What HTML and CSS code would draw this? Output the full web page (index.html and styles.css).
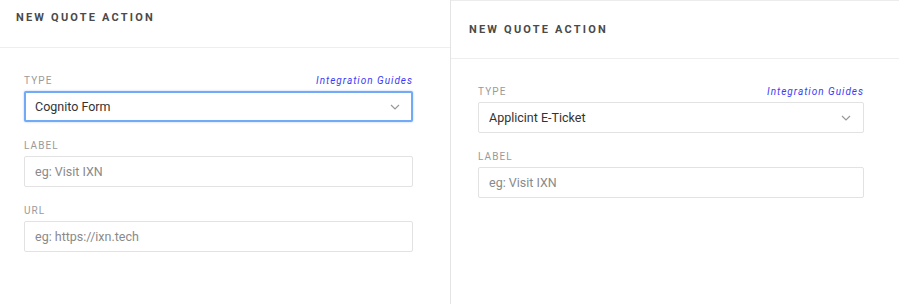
FILE: index.html
```html
<!DOCTYPE html>
<html lang="en">
<head>
<meta charset="UTF-8">
<title>New Quote Action</title>
<link rel="stylesheet" href="styles.css">
</head>
<body>

<div class="panels">
  <div class="panel panel-left">
    <div class="panel-header">
      <h2>New Quote Action</h2>
    </div>
    <div class="panel-body">
      <div class="field">
        <div class="field-label">
          <span>Type</span>
          <a href="#" class="guide-link">Integration Guides</a>
        </div>
        <div class="select focused">
          <span>Cognito Form</span>
          <svg class="chevron" width="10" height="6" viewBox="0 0 10 6"><path d="M1 1l4 4 4-4" fill="none" stroke="#999" stroke-width="1.2"/></svg>
        </div>
      </div>
      <div class="field">
        <div class="field-label"><span>Label</span></div>
        <input type="text" placeholder="eg: Visit IXN">
      </div>
      <div class="field">
        <div class="field-label"><span>URL</span></div>
        <input type="text" placeholder="eg: https://ixn.tech">
      </div>
    </div>
  </div>

  <div class="panel panel-right">
    <div class="panel-header">
      <h2>New Quote Action</h2>
    </div>
    <div class="panel-body">
      <div class="field">
        <div class="field-label">
          <span>Type</span>
          <a href="#" class="guide-link">Integration Guides</a>
        </div>
        <div class="select">
          <span>Applicint E-Ticket</span>
          <svg class="chevron" width="10" height="6" viewBox="0 0 10 6"><path d="M1 1l4 4 4-4" fill="none" stroke="#999" stroke-width="1.2"/></svg>
        </div>
      </div>
      <div class="field">
        <div class="field-label"><span>Label</span></div>
        <input type="text" placeholder="eg: Visit IXN">
      </div>
    </div>
  </div>
</div>

</body>
</html>
```

FILE: styles.css
```css
  body {
    margin: 0;
    padding: 0;
    background-color: #fff;
    font-family: Roboto, "Liberation Sans", sans-serif;
  }
  .panels {
    display: flex;
    height: 304px;
  }
  .panel-left {
    width: 450px;
    border-right: 1px solid #e4e4e4;
  }
  .panel-right {
    flex: 1;
    border-top: 1px solid #ececec;
  }
  .panel-header {
    border-bottom: 1px solid #eeeeee;
  }
  .panel-header h2 {
    margin: 0;
    font-size: 11px;
    line-height: 14px;
    font-weight: 700;
    letter-spacing: 2.2px;
    text-transform: uppercase;
    color: #4a4a4a;
  }
  .panel-left .panel-header {
    padding: 11px 16px 22px;
  }
  .panel-right .panel-header {
    padding: 22px 18px 21px;
  }
  .panel-body {
    padding-top: 25px;
  }
  .panel-left .panel-body {
    padding-left: 24px;
    padding-right: 37px;
  }
  .panel-right .panel-body {
    padding-left: 27px;
    padding-right: 35px;
  }
  .field {
    margin-bottom: 16px;
  }
  .field-label {
    display: flex;
    justify-content: space-between;
    align-items: center;
    height: 14px;
    margin-bottom: 4px;
    font-size: 10px;
    letter-spacing: 1.1px;
    text-transform: uppercase;
    color: #9a9a9a;
  }
  .guide-link {
    text-transform: none;
    font-style: italic;
    color: #3b3bf5;
    letter-spacing: 1px;
    text-decoration: none;
  }
  .select, .field input {
    box-sizing: border-box;
    width: 100%;
    height: 31px;
    border: 1px solid #e2e2e2;
    border-radius: 2px;
    background: #fff;
    font-family: Roboto, "Liberation Sans", sans-serif;
    font-size: 12.5px;
    color: #333;
  }
  .select {
    display: flex;
    align-items: center;
    justify-content: space-between;
    padding: 0 12px 0 10px;
  }
  .select.focused {
    border: 2px solid #72aaf6;
    box-shadow: 0 0 2px rgba(80, 140, 240, 0.5);
    padding-left: 9px;
    padding-right: 11px;
  }
  .field input {
    display: block;
    padding: 0 10px;
    outline: none;
  }
  .field input::placeholder {
    color: #8a8a8a;
  }
```
